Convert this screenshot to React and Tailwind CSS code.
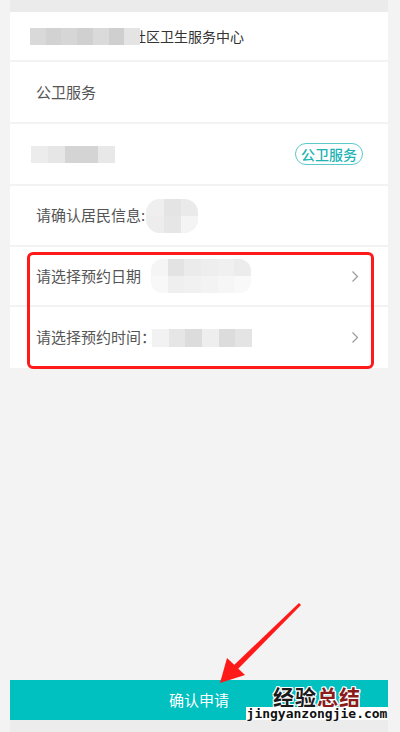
import React from "react";

const font = { fontFamily: '"Noto Sans CJK SC", "Noto Sans", sans-serif' };

function Mosaic({ cells, className }) {
  return (
    <div className={"flex " + (className || "")}>
      {cells.map((c, i) => (
        <div key={i} className="h-full flex-1" style={{ background: c }} />
      ))}
    </div>
  );
}

function Chevron() {
  return (
    <svg width="8" height="13" viewBox="0 0 8 13" className="shrink-0">
      <path d="M1.5 1.5 L6.5 6.5 L1.5 11.5" fill="none" stroke="#9a9a9a" strokeWidth="1.2" />
    </svg>
  );
}

const halo = { textShadow: "1px 1px 0 #fff, -1px -1px 0 #fff, 1px -1px 0 #fff, -1px 1px 0 #fff, 0 1px 0 #fff, 0 -1px 0 #fff, 1px 0 0 #fff, -1px 0 0 #fff" };

export default function App() {
  return (
    <div className="relative h-[732px] w-[400px] overflow-hidden bg-[#f3f3f3] text-[#555]" style={font}>
      <div className="flex h-full flex-col pl-[10px] pr-[12px]">
        <div className="h-[12px] shrink-0 bg-[#ebebeb]" />
        <div className="flex flex-col bg-white">
          {/* row 1 */}
          <div className="flex h-[50px] items-center border-b-2 border-[#f3f3f3] pl-[20px]">
            <Mosaic
              className="relative z-10 h-[17px] w-[110px]"
              cells={["#d9d9d9", "#d2d2d2", "#d6d6d6", "#d0d0d0", "#dadada", "#cfcfcf", "#e4e4e4"]}
            />
            <span className="ml-[-8px] text-[14px] leading-none text-[#333]">社区卫生服务中心</span>
          </div>
          {/* row 2 */}
          <div className="flex h-[62px] items-center border-b-2 border-[#f3f3f3] pl-[26px] text-[15px]">
            公卫服务
          </div>
          {/* row 3 */}
          <div className="flex h-[62px] items-center justify-between border-b-2 border-[#f3f3f3] pl-[21px] pr-[25px]">
            <Mosaic className="h-[17px] w-[84px]" cells={["#ececec", "#e6e6e6", "#d4d4d4", "#d4d4d4", "#e8e8e8"]} />
            <span className="rounded-full border border-[#5cc9c9] px-[5px] py-[1px] text-[14px] font-medium leading-[18px] text-[#20b3b3]">
              公卫服务
            </span>
          </div>
          {/* row 4 */}
          <div className="flex h-[61px] items-center border-b-2 border-[#f3f3f3] pl-[26px] text-[15px]">
            <span>请确认居民信息:</span>
            <div className="ml-[1px] flex h-[34px] w-[52px] flex-col overflow-hidden rounded-[14px] bg-[#f6f6f6]">
              <Mosaic className="h-1/2 w-full" cells={["#efefef", "#e4e4e4", "#eaeaea"]} />
              <Mosaic className="h-1/2 w-full" cells={["#ededed", "#e6e6e6", "#f4f4f4"]} />
            </div>
          </div>
          {/* row 5 */}
          <div className="flex h-[60px] items-center border-b-2 border-[#f3f3f3] pl-[26px] pr-[29px] text-[15px]">
            <span>请选择预约日期</span>
            <div className="ml-[10px] flex h-[34px] w-[100px] flex-col overflow-hidden rounded-[12px] bg-[#f7f7f7]">
              <Mosaic className="h-1/2 w-full" cells={["#f5f5f5", "#e3e3e3", "#ebebeb", "#eeeeee", "#f0f0f0", "#ececec"]} />
              <Mosaic className="h-1/2 w-full" cells={["#f8f8f8", "#efefef", "#f1f1f1", "#f3f3f3", "#f6f6f6", "#f9f9f9"]} />
            </div>
            <div className="flex-1" />
            <Chevron />
          </div>
          {/* row 6 */}
          <div className="flex h-[61px] items-center pl-[26px] pr-[29px] text-[15px]">
            <span>请选择预约时间：</span>
            <Mosaic
              className="ml-[-4px] h-[18px] w-[100px]"
              cells={["#f2f2f2", "#e6e6e6", "#dcdcdc", "#eeeeee", "#dcdcdc", "#e4e4e4"]}
            />
            <div className="flex-1" />
            <Chevron />
          </div>
        </div>
        <div className="flex-1" />
        <div className="flex h-[40px] shrink-0 items-center justify-center bg-[#00c0c0] text-[15px] text-white">
          确认申请
        </div>
        <div className="h-[12px] shrink-0 bg-[#ececec]" />
      </div>

      {/* red annotation box */}
      <div className="absolute left-[27px] top-[252px] h-[117px] w-[347px] rounded-[6px] border-[3px] border-[#ff1a1a]" />

      {/* red arrow */}
      <svg className="absolute left-0 top-0" width="400" height="732" viewBox="0 0 400 732">
        <polygon points="299,603 301,605 236,671 232,667" fill="#ff1a1a" />
        <polygon points="220,683 227,658 245,675" fill="#ff1a1a" />
      </svg>

      {/* watermark */}
      <div className="absolute left-[246px] top-[685px] flex w-[142px] flex-col items-center">
        <div
          className="flex h-[22px] items-center text-[21px] font-bold leading-[22px] tracking-[1px]"
          style={{ fontFamily: '"Noto Sans CJK SC", sans-serif' }}
        >
          <span className="block text-[#1a1a1a]" style={halo}>经验</span>
          <span className="block text-[#8b1c1c]" style={halo}>总结</span>
        </div>
        <div
          className="bg-white px-[1px] text-[13px] font-bold leading-[13px] text-[#111]"
          style={{ fontFamily: '"DejaVu Sans Mono", monospace' }}
        >
          jingyanzongjie.com
        </div>
      </div>
    </div>
  );
}
